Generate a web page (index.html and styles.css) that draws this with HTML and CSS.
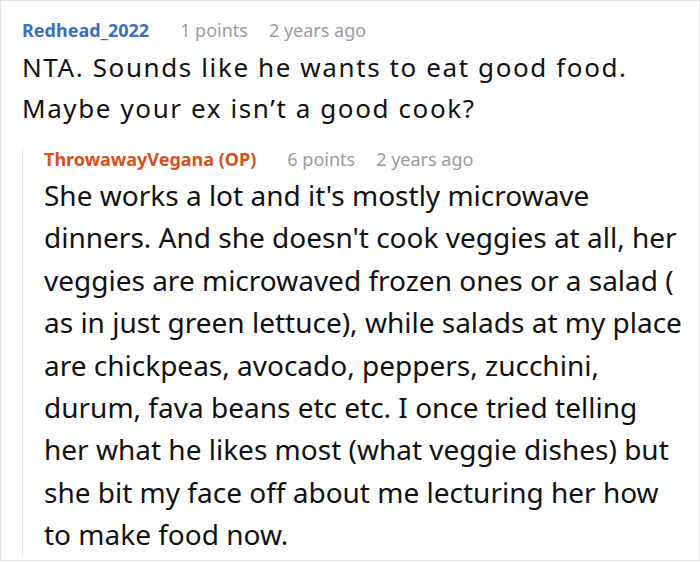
FILE: index.html
```html
<!DOCTYPE html>
<html>
<head>
<meta charset="utf-8">
<link rel="stylesheet" href="styles.css">
</head>
<body>
<div class="thread">
  <div class="comment">
    <div class="meta">
      <span class="author author-blue">Redhead_2022</span>
      <span class="info">1 points</span>
      <span class="info">2 years ago</span>
    </div>
    <p class="text text-top">NTA. Sounds like he wants to eat good food.<br>Maybe your ex isn’t a good cook?</p>
    <div class="reply">
      <div class="meta">
        <span class="author author-orange">ThrowawayVegana (OP)</span>
        <span class="info">6 points</span>
        <span class="info">2 years ago</span>
      </div>
      <p class="text text-reply">She works a lot and it's mostly microwave<br>dinners. And she doesn't cook veggies at all, her<br>veggies are microwaved frozen ones or a salad (<br>as in just green lettuce), while salads at my place<br>are chickpeas, avocado, peppers, zucchini,<br>durum, fava beans etc etc. I once tried telling<br>her what he likes most (what veggie dishes) but<br>she bit my face off about me lecturing her how<br>to make food now.</p>
    </div>
  </div>
</div>
</body>
</html>
```
FILE: styles.css
```css
html, body {
  margin: 0;
  padding: 0;
  background: #fff;
}
.thread {
  width: 700px;
  height: 561px;
  box-sizing: border-box;
  border: 1px solid #e4e4e4;
  overflow: hidden;
  font-family: "Noto Sans", "Open Sans", sans-serif;
  color: #111;
}
.comment {
  padding: 16px 0 0 21px;
}
.meta {
  display: flex;
  gap: 21px;
  align-items: baseline;
  font-size: 18px;
  line-height: 26px;
  white-space: nowrap;
}
.author {
  font-weight: 700;
  margin-right: 10px;
}
.author-blue { color: #3b6fb8; }
.author-orange { color: #d4501e; }
.info {
  color: #9b9b9b;
}
.text {
  margin: 0;
  white-space: nowrap;
}
.text-top {
  margin-top: 4px;
  font-size: 26px;
  letter-spacing: 1.6px;
  line-height: 40.5px;
}
.reply {
  margin-top: 21px;
  border-left: 1px solid #e2e2e2;
  padding-left: 21px;
}
.reply .meta {
  line-height: 20px;
}
.text-reply {
  margin-top: 5px;
  margin-bottom: -13px;
  font-size: 28px;
  line-height: 42.4px;
}
```
